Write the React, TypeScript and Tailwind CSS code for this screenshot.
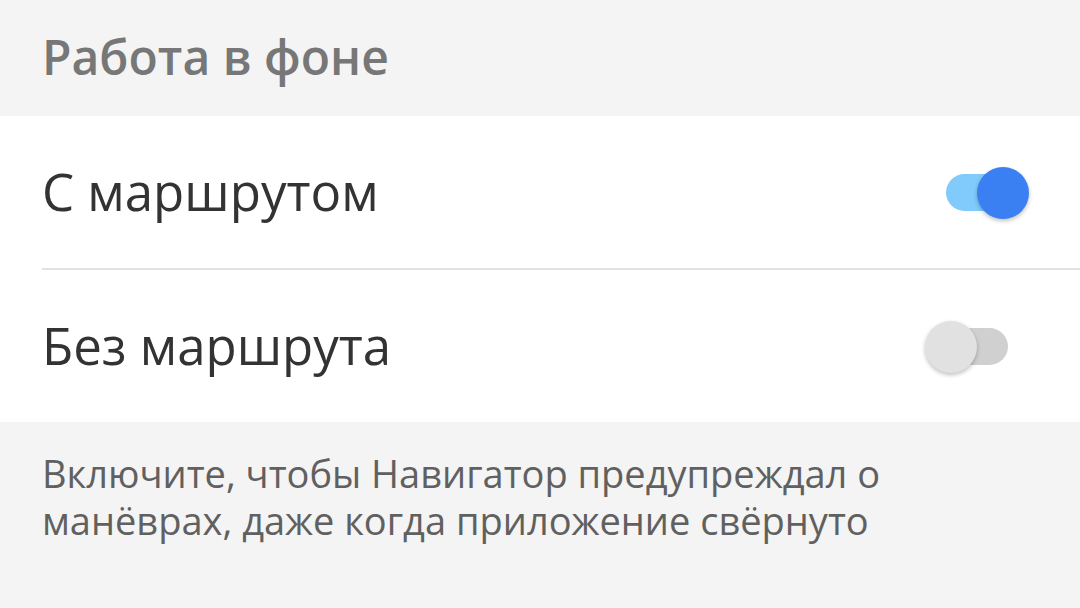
import React, { useState } from "react";

function Toggle({ on, onClick }: { on: boolean; onClick: () => void }) {
  return (
    <button onClick={onClick} className="relative w-[62px] h-[37px] shrink-0">
      <span
        className={`absolute inset-0 rounded-full ${on ? "bg-[#80cbfb]" : "bg-[#d0d0d0]"}`}
      />
      <span
        className={`absolute top-[-7px] w-[52px] h-[52px] rounded-full shadow-[0_2px_4px_rgba(0,0,0,0.25)] ${
          on ? "left-[31px] bg-[#3b80f3]" : "left-[-21px] bg-[#e1e1e1]"
        }`}
      />
    </button>
  );
}

export default function App() {
  const [withRoute, setWithRoute] = useState(true);
  const [noRoute, setNoRoute] = useState(false);

  return (
    <div
      className="w-[1080px] h-[608px] bg-[#f4f4f4] flex flex-col overflow-hidden"
      style={{ fontFamily: '"Open Sans", "Noto Sans", sans-serif' }}
    >
      {/* Header */}
      <div className="h-[116px] flex items-center px-[42px]">
        <h1 className="text-[48px] font-semibold text-[#777777] leading-none pb-[2px]">
          Работа в фоне
        </h1>
      </div>

      {/* Options */}
      <div className="bg-white">
        <div className="h-[152px] flex items-center justify-between pl-[42px] pr-[72px]">
          <span className="text-[51px] leading-none text-[#333333] pb-[2px]">С маршрутом</span>
          <Toggle on={withRoute} onClick={() => setWithRoute(!withRoute)} />
        </div>
        <div className="ml-[42px] h-[2px] bg-[#e2e2e2]" />
        <div className="h-[152px] flex items-center justify-between pl-[42px] pr-[72px]">
          <span className="text-[51px] leading-none text-[#333333] pb-[2px]">Без маршрута</span>
          <Toggle on={noRoute} onClick={() => setNoRoute(!noRoute)} />
        </div>
      </div>

      {/* Footer note */}
      <p className="px-[42px] pt-[28px] text-[38px] leading-[47px] text-[#606060]">
        Включите, чтобы Навигатор предупреждал о
        <br />
        манёврах, даже когда приложение свёрнуто
      </p>
    </div>
  );
}
